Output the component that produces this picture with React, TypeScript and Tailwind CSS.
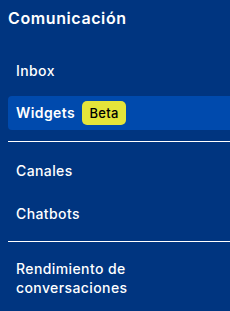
import React from "react";

export default function App() {
  const font = { fontFamily: "Inter, 'Noto Sans', sans-serif" };
  return (
    <div
      className="w-[230px] h-[311px] bg-[#003580] pl-2 pt-[6px] overflow-hidden text-white"
      style={font}
    >
      <div className="text-[16px] leading-[24px] font-semibold tracking-[0.6px]">Comunicación</div>
      <div className="mt-[24px] flex flex-col tracking-[0.4px]">
        <div className="h-[34px] flex items-center px-2 text-[14px] leading-[20px] font-medium">Inbox</div>
        <div className="mt-[8px] h-[34px] flex items-center gap-[7px] px-2 bg-[#004aad] rounded-l-[4px] text-[14px] leading-[20px] font-semibold">
          <span>Widgets</span>
          <span className="h-[24px] w-[44px] flex items-center justify-center rounded-[5px] bg-[#e4e43a] text-black text-[13px] font-medium tracking-[0.3px]">
            Beta
          </span>
        </div>
        <div className="mt-[11px] h-px bg-white" />
        <div className="mt-[12px] h-[34px] flex items-center px-2 text-[14px] leading-[20px] font-medium">Canales</div>
        <div className="mt-[9px] h-[34px] flex items-center px-2 text-[14px] leading-[20px] font-medium">Chatbots</div>
        <div className="mt-[10px] h-px bg-white" />
        <div className="mt-[18px] px-2 text-[14px] leading-[18.5px] font-medium">
          Rendimiento de
          <br />
          conversaciones
        </div>
      </div>
    </div>
  );
}
